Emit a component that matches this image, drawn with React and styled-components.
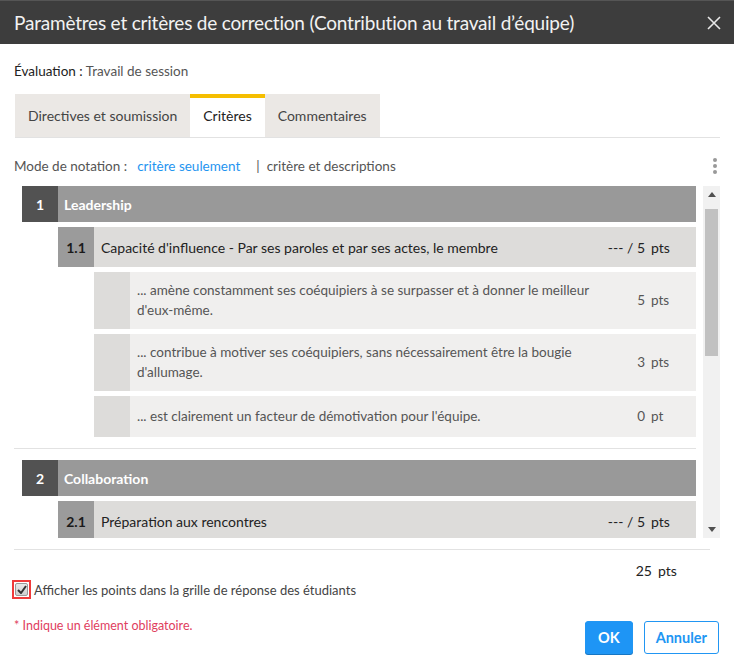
import React from "react";
import styled, { createGlobalStyle } from "styled-components";

const GlobalStyle = createGlobalStyle`
  body { margin: 0; font-family: Lato, "Open Sans", sans-serif; background: #fff; }
  * { box-sizing: border-box; }
`;

const Dialog = styled.div`
  width: 734px;
  height: 671px;
  background: #fff;
  display: flex;
  flex-direction: column;
  overflow: hidden;
`;

const Header = styled.div`
  height: 44px;
  flex: none;
  background: #3d3d3d;
  border-top: 1px solid #555;
  display: flex;
  align-items: center;
  justify-content: space-between;
  padding: 0 12px 0 14px;
  color: #f2f2f2;
  font-size: 19px;
  letter-spacing: -0.2px;
`;

const Close = styled.button`
  background: none;
  border: 0;
  padding: 0;
  width: 16px;
  height: 16px;
  display: flex;
  cursor: pointer;
`;

const Body = styled.div`
  padding: 0 14px;
  display: flex;
  flex-direction: column;
`;

const EvalLine = styled.div`
  margin-top: 19px;
  font-size: 13.5px;
  color: #555;
  b { font-weight: 400; color: #222; }
`;

const Tabs = styled.div`
  margin-top: 15px;
  margin-left: 1px;
  display: flex;
  height: 44px;
  border-bottom: 1px solid #e2e2e2;
`;

const Tab = styled.div`
  display: flex;
  align-items: center;
  padding: 0 13px 4px;
  font-size: 14px;
  color: ${(p) => (p.$active ? "#222" : "#444")};
  background: ${(p) => (p.$active ? "#fff" : "#ebe8e5")};
  border-top: 4px solid ${(p) => (p.$active ? "#f5be00" : "#ebe8e5")};
`;

const ModeRow = styled.div`
  margin-top: 18px;
  height: 20px;
  display: flex;
  align-items: center;
  font-size: 13.5px;
  color: #555;
`;

const ModeLink = styled.span`
  color: ${(p) => (p.$active ? "#1f95f0" : "#555")};
  margin-left: ${(p) => p.$gap || 0}px;
`;

const Sep = styled.span`
  margin: 0 7px 0 16px;
  color: #555;
`;

const Kebab = styled.div`
  margin-left: auto;
  margin-right: 3px;
  display: flex;
  flex-direction: column;
  gap: 2px;
  span { width: 4px; height: 4px; border-radius: 50%; background: #999; }
`;

const Scroll = styled.div`
  margin-top: 10px;
  height: 352px;
  display: flex;
`;

const Viewport = styled.div`
  flex: 1;
  overflow-y: auto;
  scrollbar-width: none;
  padding-left: 8px;
  padding-right: 7px;
  &::-webkit-scrollbar { display: none; }
`;

const ScrollBar = styled.div`
  width: 17px;
  flex: none;
  background: #f1f1f1;
  display: flex;
  flex-direction: column;
`;

const Arrow = styled.div`
  height: 17px;
  display: flex;
  align-items: center;
  justify-content: center;
`;

const Track = styled.div`
  flex: 1;
  padding: 6px 2px 0;
`;

const Thumb = styled.div`
  height: 147px;
  background: #c1c1c1;
`;

const Block = styled.div`
  padding-bottom: 11px;
  margin-bottom: 11px;
  border-bottom: ${(p) => (p.$last ? "none" : "1px solid #e2e2e2")};
  margin-left: -8px;
  padding-left: 8px;
`;

const CritRow = styled.div`
  display: flex;
  height: 36px;
  font-weight: 700;
  font-size: 14px;
  color: #fff;
`;

const Num = styled.div`
  width: 36px;
  flex: none;
  display: flex;
  align-items: center;
  justify-content: center;
  background: ${(p) => p.$bg};
  color: ${(p) => p.$color || "#fff"};
  font-weight: 700;
`;

const CritTitle = styled.div`
  flex: 1;
  background: #999;
  display: flex;
  align-items: center;
  padding-left: 6px;
`;

const SubRow = styled.div`
  display: flex;
  margin: 5px 0 0 36px;
  height: 40px;
  font-size: 14px;
  color: #222;
`;

const SubTitle = styled.div`
  flex: 1;
  background: #dddcda;
  display: flex;
  align-items: center;
  padding-left: 7px;
`;

const LevelRow = styled.div`
  display: flex;
  margin: 5px 0 0 72px;
  font-size: 13.5px;
  color: #555;
`;

const LevelCell = styled.div`
  width: 36px;
  flex: none;
  background: #dddcda;
`;

const LevelText = styled.div`
  flex: 1;
  background: #f0efee;
  display: flex;
  align-items: center;
  padding: 8px 0 9px 7px;
  line-height: 20px;
  min-height: 41px;
`;

const LevelDesc = styled.div`
  flex: 1;
  padding-right: ${(p) => p.$pad || 20}px;
`;

const Pts = styled.div`
  flex: none;
  display: flex;
  align-items: center;
  padding-right: 25px;
  span:first-child { text-align: right; }
  span:last-child { width: 20px; margin-left: 6px; }
`;

const Divider = styled.div`
  margin-top: 11px;
  height: 1px;
  background: #e2e2e2;
  margin-right: 10px;
`;

const Total = styled.div`
  display: flex;
  justify-content: flex-end;
  margin-top: 12px;
  margin-right: 17px;
  font-size: 14px;
  color: #222;
`;

const CheckLine = styled.label`
  display: flex;
  align-items: center;
  margin-top: 1px;
  margin-left: -2px;
  font-size: 13px;
  color: #444;
  gap: 3px;
`;

const CheckFrame = styled.span`
  width: 19px;
  height: 19px;
  border: 2px solid #ef3b3b;
  display: flex;
  align-items: center;
  justify-content: center;
`;

const CheckBox = styled.span`
  width: 13px;
  height: 13px;
  border: 1px solid #999;
  border-radius: 2px;
  background: linear-gradient(#e8e8e8, #cfcfcf);
  display: flex;
  align-items: center;
  justify-content: center;
`;

const Footer = styled.div`
  display: flex;
  align-items: flex-start;
  margin-top: 18px;
`;

const Required = styled.div`
  font-size: 12.5px;
  color: #e0405e;
  margin-top: 1px;
`;

const Buttons = styled.div`
  margin-left: auto;
  margin-top: 4px;
  margin-right: 1px;
  display: flex;
  gap: 11px;
`;

const Button = styled.button`
  height: 33px;
  padding: 0 ${(p) => (p.$primary ? "12px" : "11px")};
  border-radius: 3px;
  font-family: inherit;
  font-size: 14.5px;
  font-weight: 700;
  border: 1px solid #2196f3;
  background: ${(p) => (p.$primary ? "#1e95f5" : "#fff")};
  color: ${(p) => (p.$primary ? "#fff" : "#2196f3")};
  box-shadow: ${(p) => (p.$primary ? "0 1px 0 #1676c4" : "none")};
`;

const criteria = [
  {
    n: "1",
    title: "Leadership",
    subs: [
      {
        n: "1.1",
        title: "Capacité d'influence - Par ses paroles et par ses actes, le membre",
        max: 5,
        levels: [
          ["... amène constamment ses coéquipiers à se surpasser et à donner le meilleur d'eux-même.", 5, "pts"],
          ["... contribue à motiver ses coéquipiers, sans nécessairement être la bougie d'allumage.", 3, "pts"],
          ["... est clairement un facteur de démotivation pour l'équipe.", 0, "pt"],
        ],
      },
    ],
  },
  {
    n: "2",
    title: "Collaboration",
    subs: [
      {
        n: "2.1",
        title: "Préparation aux rencontres",
        max: 5,
        levels: [
          ["... arrive toujours aux rencontres bien préparé et ayant complété le travail demandé.", 5, "pts"],
          ["... arrive parfois aux rencontres sans avoir complété le travail demandé.", 3, "pts"],
          ["... arrive rarement préparé aux rencontres.", 0, "pt"],
        ],
      },
    ],
  },
];

const Dots = () => (
  <Kebab>
    <span />
    <span />
    <span />
  </Kebab>
);

const Triangle = ({ down }) => (
  <svg width="8" height="5" viewBox="0 0 8 5">
    <path d={down ? "M0 0 L8 0 L4 5 Z" : "M0 5 L8 5 L4 0 Z"} fill="#505050" />
  </svg>
);

export default function App() {
  return (
    <Dialog>
      <GlobalStyle />
      <Header>
        <span>Paramètres et critères de correction (Contribution au travail d’équipe)</span>
        <Close aria-label="Fermer">
          <svg width="16" height="16" viewBox="0 0 16 16">
            <path d="M2 2 L14 14 M14 2 L2 14" stroke="#e8e8e8" strokeWidth="1.6" />
          </svg>
        </Close>
      </Header>
      <Body>
        <EvalLine>
          <b>Évaluation :</b> Travail de session
        </EvalLine>
        <Tabs>
          <Tab>Directives et soumission</Tab>
          <Tab $active>Critères</Tab>
          <Tab>Commentaires</Tab>
        </Tabs>
        <ModeRow>
          Mode de notation :
          <ModeLink $active $gap={10}>critère seulement</ModeLink>
          <Sep>|</Sep>
          <ModeLink>critère et descriptions</ModeLink>
          <Dots />
        </ModeRow>
        <Scroll>
          <Viewport>
            {criteria.map((c, i) => (
              <Block key={c.n} $last={i === criteria.length - 1}>
                <CritRow>
                  <Num $bg="#525252">{c.n}</Num>
                  <CritTitle>{c.title}</CritTitle>
                </CritRow>
                {c.subs.map((s) => (
                  <React.Fragment key={s.n}>
                    <SubRow>
                      <Num $bg="#9b9b9b" $color="#1a1a1a">{s.n}</Num>
                      <SubTitle>
                        <LevelDesc>{s.title}</LevelDesc>
                        <Pts>
                          <span>--- / {s.max}</span>
                          <span>pts</span>
                        </Pts>
                      </SubTitle>
                    </SubRow>
                    {s.levels.map(([text, pts, unit]) => (
                      <LevelRow key={text}>
                        <LevelCell />
                        <LevelText>
                          <LevelDesc $pad={36}>{text}</LevelDesc>
                          <Pts>
                            <span>{pts}</span>
                            <span>{unit}</span>
                          </Pts>
                        </LevelText>
                      </LevelRow>
                    ))}
                  </React.Fragment>
                ))}
              </Block>
            ))}
          </Viewport>
          <ScrollBar>
            <Arrow>
              <Triangle />
            </Arrow>
            <Track>
              <Thumb />
            </Track>
            <Arrow>
              <Triangle down />
            </Arrow>
          </ScrollBar>
        </Scroll>
        <Divider />
        <Total>
          <Pts>
            <span>25</span>
            <span>pts</span>
          </Pts>
        </Total>
        <CheckLine>
          <CheckFrame>
            <CheckBox>
              <svg width="10" height="9" viewBox="0 0 10 9">
                <path d="M1 5 L4 8 L9 1" stroke="#333" strokeWidth="2" fill="none" />
              </svg>
            </CheckBox>
          </CheckFrame>
          Afficher les points dans la grille de réponse des étudiants
        </CheckLine>
        <Footer>
          <Required>* Indique un élément obligatoire.</Required>
          <Buttons>
            <Button $primary>OK</Button>
            <Button>Annuler</Button>
          </Buttons>
        </Footer>
      </Body>
    </Dialog>
  );
}
